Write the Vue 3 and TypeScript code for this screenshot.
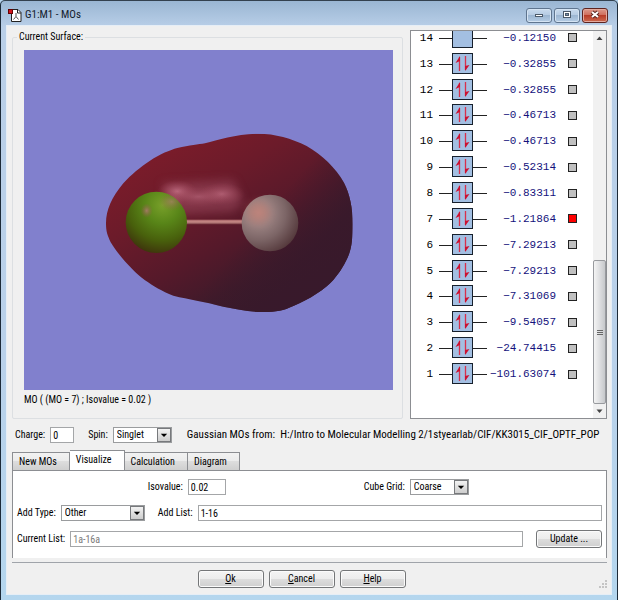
<script setup lang="ts">
import { ref } from 'vue'

interface Orbital {
  id: number
  energy: string
  occupied: boolean
  active: boolean
}

const energies: string[] = [
  '−0.12150', '−0.32855', '−0.32855', '−0.46713', '−0.46713', '−0.52314', '−0.83311',
  '−1.21864', '−7.29213', '−7.29213', '−7.31069', '−9.54057', '−24.74415', '−101.63074',
]

const orbitals = ref<Orbital[]>(
  energies.map((energy, i) => {
    const id = energies.length - i
    return { id, energy, occupied: id < 14, active: id === 7 }
  }),
)

const tabs: string[] = ['New MOs', 'Visualize', 'Calculation', 'Diagram']
const activeTab = ref('Visualize')

const charge = ref('0')
const isovalue = ref('0.02')
const addList = ref('1-16')
const currentList = ref('1a-16a')
</script>

<template>
  <div class="window">
    <header class="titlebar">
      <svg class="app-icon" width="14" height="14" viewBox="0 0 14 14">
        <path d="M3.5 1.5h6.500l3 3v9h-9.500z" fill="#fff" stroke="#222" />
        <path d="M9.500 1.500v3.500h3.500" fill="none" stroke="#222" />
        <path d="M8 5v3.500l-2.500 3M8 8.500l2.500 3" fill="none" stroke="#555" />
        <rect x="0.500" y="1.500" width="4" height="4" fill="#d0141c" stroke="#600" />
      </svg>
      <h1 class="title">G1:M1 - MOs</h1>
      <div class="caption-buttons">
        <button type="button" class="cap">
          <svg width="12" height="10" viewBox="0 0 12 10"><rect x="2.500" y="4.500" width="7" height="2" fill="#fff" stroke="#4c5a6a" /></svg>
        </button>
        <button type="button" class="cap">
          <svg width="12" height="10" viewBox="0 0 12 10"><rect x="2.500" y="1.500" width="7" height="6" fill="#fff" stroke="#4c5a6a" /><rect x="4.500" y="3.500" width="3" height="2" fill="#7c93ad" stroke="#4c5a6a" /></svg>
        </button>
        <button type="button" class="cap close">
          <svg width="12" height="10" viewBox="0 0 12 10"><path d="M3 2l6 5M9 2l-6 5" stroke="#5a2620" stroke-width="4" /><path d="M3 2l6 5M9 2l-6 5" stroke="#fff" stroke-width="2" /></svg>
        </button>
      </div>
    </header>

    <main class="client">
      <section class="top">
        <fieldset class="surface">
          <legend>Current Surface:</legend>
          <svg class="scene" viewBox="0 0 369 340">
            <defs>
              <linearGradient id="skin" gradientUnits="userSpaceOnUse" x1="170" y1="100" x2="450" y2="590">
                <stop offset="0" stop-color="#7c1c2a" />
                <stop offset="0.3" stop-color="#6c1b2a" />
                <stop offset="0.62" stop-color="#55192a" />
                <stop offset="0.85" stop-color="#401a2a" />
                <stop offset="1" stop-color="#381929" />
              </linearGradient>
              <linearGradient id="shade" gradientUnits="userSpaceOnUse" x1="580" y1="220" x2="720" y2="340">
                <stop offset="0" stop-color="#38192b" stop-opacity="0" />
                <stop offset="1" stop-color="#38192b" stop-opacity="0.900" />
              </linearGradient>
              <radialGradient id="glow">
                <stop offset="0" stop-color="#c8758a" stop-opacity="0.800" />
                <stop offset="1" stop-color="#a04558" stop-opacity="0" />
              </radialGradient>
              <radialGradient id="green" cx="0.6" cy="0.22" r="0.85">
                <stop offset="0" stop-color="#78a02a" />
                <stop offset="0.35" stop-color="#588518" />
                <stop offset="0.68" stop-color="#48600c" />
                <stop offset="1" stop-color="#3c2c0c" />
              </radialGradient>
              <radialGradient id="grey" cx="0.3" cy="0.32" r="0.8">
                <stop offset="0" stop-color="#b08c88" />
                <stop offset="0.3" stop-color="#988080" />
                <stop offset="0.6" stop-color="#7c6566" />
                <stop offset="1" stop-color="#503437" />
              </radialGradient>
              <linearGradient id="bond" x1="0" y1="0" x2="0" y2="1">
                <stop offset="0" stop-color="#a56064" />
                <stop offset="0.5" stop-color="#c88c88" />
                <stop offset="1" stop-color="#74383f" />
              </linearGradient>
              <clipPath id="body-clip">
                <path d="M48 310C48 270 65 232 100 190C125 162 150 142 180 122C210 102 240 90 262 84C300 76 325 73 345 70C385 60 440 41 505 41C555 41 605 55 650 78C695 103 738 145 762 188C780 222 788 265 788 312C788 350 786 378 778 400C768 428 750 457 730 480C705 508 660 537 610 558C580 572 560 576 520 576C480 577 440 567 400 560C370 553 345 546 320 542C295 537 275 533 250 527C215 514 190 498 165 481C130 455 85 405 62 367C52 345 48 335 48 310Z" />
              </clipPath>
              <filter id="soft" x="-30%" y="-60%" width="160%" height="220%"><feGaussianBlur stdDeviation="14" /></filter>
            </defs>
            <rect width="369" height="340" fill="#8180cd" />
            <g transform="translate(66 70) scale(0.3333)">
              <g clip-path="url(#body-clip)">
                <rect x="40" y="30" width="760" height="560" fill="url(#skin)" />
                <rect x="40" y="30" width="760" height="560" fill="url(#shade)" />
                <path d="M215 190L430 180L460 245L430 275L240 285Z" fill="#9a4c60" opacity="0.550" filter="url(#soft)" />
                <ellipse cx="262" cy="214" rx="60" ry="34" fill="url(#glow)" />
                <ellipse cx="395" cy="222" rx="70" ry="34" fill="url(#glow)" opacity="0.800" />
                <ellipse cx="325" cy="230" rx="95" ry="32" fill="url(#glow)" opacity="0.600" />
              </g>
              <rect x="280" y="299" width="186" height="14" fill="url(#bond)" />
              <circle cx="199" cy="307" r="92" fill="url(#green)" />
              <ellipse cx="170" cy="272" rx="18" ry="22" fill="url(#glow)" opacity="0.800" />
              <ellipse cx="245" cy="245" rx="38" ry="28" fill="url(#glow)" opacity="0.600" />
              <circle cx="540" cy="309" r="85" fill="url(#grey)" />
              <ellipse cx="505" cy="278" rx="34" ry="32" fill="#cf7768" opacity="0.400" filter="url(#soft)" />
            </g>
          </svg>
          <p class="scene-caption">MO ( (MO = 7) ; Isovalue = 0.02 )</p>
        </fieldset>

        <div class="mo-panel">
          <ul class="mo-list">
            <li v-for="mo in orbitals" :key="mo.id" class="mo">
              <span :id="'mo-' + mo.id" class="mo-id">{{ mo.id }}</span>
              <svg class="level" width="48" height="22" viewBox="0 0 48 22">
                <path d="M0 11.500h48" stroke="#222" />
                <rect x="13.500" y="0.500" width="20" height="20" fill="#a3bfe2" stroke="#17202c" />
                <g v-if="mo.occupied">
                  <path d="M20.500 4v14M26.500 3v14" stroke="#d8304c" stroke-width="1.300" />
                  <path d="M21 3v5l-4.500 2zM26 18v-5l4.500 -1z" fill="#cc1030" />
                </g>
              </svg>
              <span class="energy">{{ mo.energy }}</span>
              <input v-model="mo.active" type="checkbox" class="swatch" :aria-labelledby="'mo-' + mo.id">
            </li>
          </ul>
          <div class="scrollbar">
            <svg width="13" height="14" viewBox="0 0 13 14"><path d="M3.500 9L6.500 5.500L9.500 9z" fill="#444" /></svg>
            <div class="thumb"><i></i><i></i><i></i></div>
            <svg width="13" height="14" viewBox="0 0 13 14"><path d="M3.500 5.500L6.500 9L9.500 5.500z" fill="#444" /></svg>
          </div>
        </div>
      </section>

      <section class="meta">
        <label for="charge">Charge:</label>
        <input id="charge" v-model="charge" type="text" class="box charge">
        <label for="spin">Spin:</label>
        <span class="combo spin">
          <select id="spin"><option>Singlet</option></select>
          <svg viewBox="0 0 14 15"><path d="M3 6h8l-4 4z" fill="#000" /></svg>
        </span>
        <p class="source">Gaussian MOs from:&nbsp; H:/Intro to Molecular Modelling 2/1styearlab/CIF/KK3015_CIF_OPTF_POP</p>
      </section>

      <nav class="tabs">
        <button
          v-for="tab in tabs"
          :key="tab"
          type="button"
          class="tab"
          :class="{ current: tab === activeTab }"
          @click="activeTab = tab"
        >{{ tab }}</button>
      </nav>
      <section class="pane">
        <div class="line first">
          <div class="half">
            <label for="iso">Isovalue:</label>
            <input id="iso" v-model="isovalue" type="text" class="box iso">
          </div>
          <div class="half">
            <label for="grid">Cube Grid:</label>
            <span class="combo spin">
              <select id="grid"><option>Coarse</option></select>
              <svg viewBox="0 0 14 15"><path d="M3 6h8l-4 4z" fill="#000" /></svg>
            </span>
          </div>
        </div>
        <div class="line">
          <label for="type">Add Type:</label>
          <span class="combo type">
            <select id="type"><option>Other</option></select>
            <svg viewBox="0 0 14 15"><path d="M3 6h8l-4 4z" fill="#000" /></svg>
          </span>
          <label for="add" class="add-label">Add List:</label>
          <input id="add" v-model="addList" type="text" class="box grow">
        </div>
        <div class="line">
          <label for="current">Current List:</label>
          <input id="current" v-model="currentList" type="text" class="box grow" disabled>
          <button type="button" class="push update">Update ...</button>
        </div>
      </section>

      <footer class="actions">
        <button type="button" class="push"><u>O</u>k</button>
        <button type="button" class="push"><u>C</u>ancel</button>
        <button type="button" class="push"><u>H</u>elp</button>
        <svg class="grip" width="8" height="8" viewBox="0 0 8 8"><path d="M6 0h2v2h-2zM6 3h2v2h-2zM3 3h2v2h-2zM6 6h2v2h-2zM3 6h2v2h-2zM0 6h2v2h-2z" fill="#c4c4c4" /></svg>
      </footer>
    </main>
  </div>
</template>

<style>
body {
  background: #b4d3ee;
}
</style>

<style scoped>
.window {
  box-sizing: border-box;
  display: flex;
  flex-direction: column;
  min-height: 100vh;
  padding: 0 5px 5px 5px;
  border: 1px solid #1c2a38;
  border-top-color: #33414f;
  border-radius: 5px 5px 0 0;
  background: linear-gradient(#9ab6d3, #b9cfe8 26px, #b9d1ea 60%, #b4d6ee);
  font: 10px/14px "Roboto Condensed", Roboto, sans-serif;
  color: #000;
}

.titlebar {
  display: flex;
  align-items: center;
  height: 24px;
  padding: 4px 0 0 2px;
  box-sizing: border-box;
}

.title {
  flex: 1;
  margin: 0 0 0 3px;
  font: 11px/14px "Noto Sans Condensed", "Noto Sans SemiCondensed", "Roboto Condensed", sans-serif;
  color: #14202e;
}

.caption-buttons {
  display: flex;
  gap: 2px;
  padding: 0 4px 0 0;
}

.cap {
  display: flex;
  align-items: center;
  justify-content: center;
  box-sizing: border-box;
  width: 26px;
  height: 15px;
  padding: 0;
  border: 1px solid #5f758f;
  border-radius: 3px;
  background: linear-gradient(#c9dbee, #b4cae2 50%, #9cb6d2 50%, #b5cde5);
  box-shadow: inset 0 0 0 1px #d5e4f3;
}

.cap.close {
  border-color: #5e2420;
  background: linear-gradient(#dc9a8c, #cf6a58 50%, #b93d28 50%, #cc6a50);
  box-shadow: inset 0 0 0 1px #e4aa9e;
}

.client {
  flex: 1;
  display: flex;
  flex-direction: column;
  border: 1px solid #e6eef6;
  background: #f0f0f0;
}

.top {
  display: flex;
  gap: 7px;
  padding: 4px 4px 0 5px;
}

.surface {
  flex: 1;
  min-width: 0;
  margin: 0;
  padding: 6px 9px 10px 11px;
  border: 1px solid #dcdfe2;
  border-radius: 2px;
}

legend {
  margin-left: -7px;
  padding: 0 2px;
}

.scene {
  display: block;
  width: 100%;
}

.scene-caption {
  margin: 3px 0 0;
}

.mo-panel {
  display: flex;
  box-sizing: border-box;
  width: 197px;
  height: 389px;
  border: 1px solid #8c8e92;
  background: #fff;
  overflow: hidden;
}

.mo-list {
  flex: 1;
  display: grid;
  grid-auto-rows: 1fr;
  height: 362px;
  margin: -6px 0 0;
  padding: 0;
  list-style: none;
  font: 11px/14px "Liberation Mono", monospace;
}

.mo {
  display: flex;
  align-items: center;
}

.mo-id {
  width: 22px;
  margin-right: 6px;
  text-align: right;
}

.level {
  flex: none;
}

.energy {
  flex: 1;
  margin-left: -8px;
  text-align: right;
  color: #14127c;
}

.swatch {
  appearance: none;
  flex: none;
  width: 9px;
  height: 9px;
  margin: 0 16px 0 12px;
  border: 1px solid #222;
  background: #c0c0c0;
}

.swatch:checked {
  background: #f00;
}

.scrollbar {
  display: flex;
  flex-direction: column;
  width: 13px;
  background: #f1f1f1;
}

.thumb {
  display: flex;
  flex-direction: column;
  align-items: center;
  justify-content: center;
  gap: 1px;
  height: 142px;
  margin-top: auto;
  border: 1px solid #989a9e;
  border-radius: 2px;
  background: linear-gradient(90deg, #f4f4f4, #dedfe1 50%, #c6c8cb);
}

.thumb i {
  width: 6px;
  height: 1px;
  background: #666;
}

.meta {
  display: flex;
  align-items: center;
  padding: 8px 4px 0 8px;
}

.meta label {
  margin-right: 5px;
}

.box {
  box-sizing: border-box;
  min-width: 0;
  height: 16px;
  padding: 0 2px;
  border: 1px solid #a4a6a8;
  background: #fff;
  font: inherit;
  color: #000;
}

.box:disabled {
  color: #7a7a7a;
}

.charge {
  flex: none;
  width: 24px;
  margin-right: 14px;
}

.combo {
  display: flex;
  flex: none;
  box-sizing: border-box;
  height: 16px;
  border: 1px solid #9a9c9e;
  background: #fff;
}

.combo select {
  appearance: none;
  flex: 1;
  min-width: 0;
  padding: 0 3px;
  border: 0;
  background: transparent;
  font: inherit;
  line-height: 12px;
  color: #000;
}

.combo svg {
  box-sizing: border-box;
  width: 14px;
  height: 14px;
  border: 1px solid #77797c;
  background: linear-gradient(#f2f2f2, #cdcdcd);
}

.spin {
  width: 59px;
}

.source {
  flex: 1;
  margin: 0 0 0 15px;
  font: 11px/14px "Noto Sans Condensed", "Noto Sans SemiCondensed", "Roboto Condensed", sans-serif;
  white-space: nowrap;
}

.tabs {
  display: flex;
  align-items: flex-end;
  padding: 7px 4px 0 5px;
}

.tab {
  box-sizing: border-box;
  height: 18px;
  padding: 0 12px 0 6px;
  border: 1px solid #8c8e92;
  border-bottom: 0;
  border-left-width: 0;
  background: linear-gradient(#f2f2f2, #ebebeb 50%, #dddddd 50%, #cfcfcf);
  font: inherit;
  color: #000;
}

.tab:first-child {
  border-left-width: 1px;
}

.tab.current {
  height: 21px;
  margin-bottom: -1px;
  padding-bottom: 3px;
  background: #fff;
}

.pane {
  display: flex;
  flex-direction: column;
  gap: 8px;
  margin: 0 4px 0 5px;
  padding: 7px 4px 10px 4px;
  border: 1px solid #8c8e92;
  border-bottom: 0;
  background: #fff;
}

.line {
  display: flex;
  align-items: center;
  min-height: 18px;
}

.line label {
  margin-right: 5px;
}

.line .add-label {
  margin-left: 13px;
}

.half {
  flex: 1;
  display: flex;
  align-items: center;
  justify-content: center;
}

.first {
  padding: 0 71px 0 55px;
}

.iso {
  width: 38px;
}

.type {
  width: 84px;
}

.grow {
  flex: 1;
}

.push {
  box-sizing: border-box;
  width: 66px;
  height: 18px;
  padding: 0;
  border: 1px solid #747678;
  border-radius: 3px;
  background: linear-gradient(#f4f4f4, #ececec 50%, #dddddd 50%, #cfcfcf);
  box-shadow: inset 0 0 0 1px #fbfbfb;
  font: inherit;
  color: #000;
}

.update {
  margin-left: 13px;
}

.actions {
  position: relative;
  display: flex;
  justify-content: center;
  gap: 5px;
  margin: 4px 4px 0 5px;
  padding: 7px 16px 6px 0;
  border-top: 1px solid #a0a4aa;
}

.grip {
  position: absolute;
  right: 0;
  bottom: 6px;
}
</style>
